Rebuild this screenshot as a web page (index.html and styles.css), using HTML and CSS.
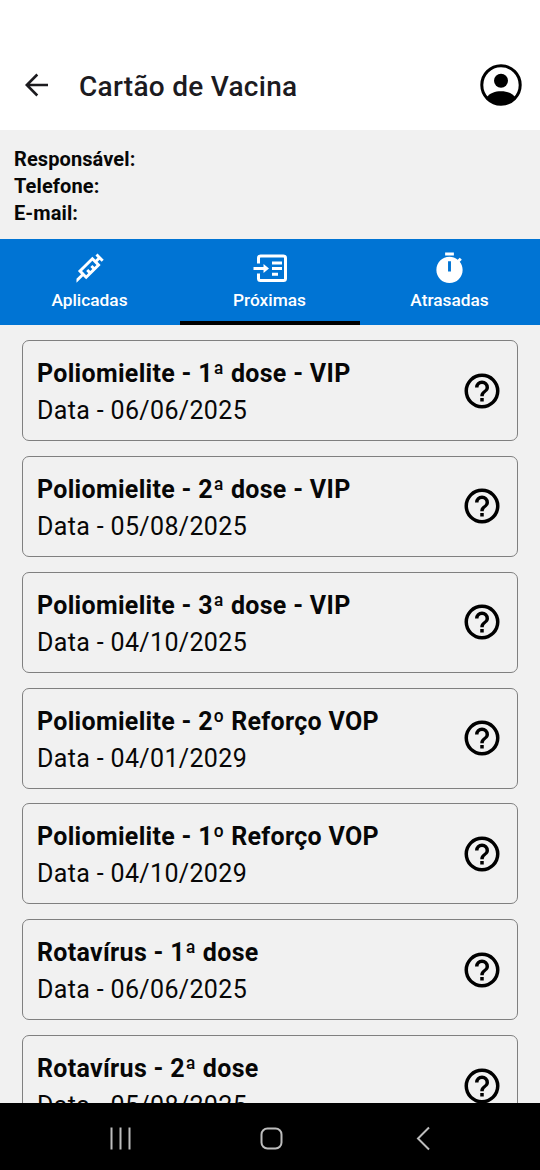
FILE: index.html
```
<!DOCTYPE html>
<html lang="pt-BR">
<head>
<meta charset="utf-8">
<title>Cartão de Vacina</title>
<link rel="stylesheet" href="styles.css">
</head>
<body>
<svg class="defs" width="0" height="0">
<symbol id="help" viewBox="0 0 24 24"><path d="M11 18h2v-2h-2v2m1-16A10 10 0 0 0 2 12a10 10 0 0 0 10 10 10 10 0 0 0 10-10A10 10 0 0 0 12 2m0 18c-4.410 0-8-3.590-8-8s3.590-8 8-8 8 3.590 8 8-3.590 8-8 8m0-14a4 4 0 0 0-4 4h2a2 2 0 0 1 2-2 2 2 0 0 1 2 2c0 2-3 1.750-3 5h2c0-2.250 3-2.500 3-5a4 4 0 0 0-4-4z"/></symbol>
</svg>
<div class="app">
<header class="bar">
<svg class="back" viewBox="0 0 24 24"><path d="M23 12H2M12.300 1.500 1.800 12l10.500 10.500"/></svg>
<h1>Cartão de Vacina</h1>
<svg class="account" viewBox="0 0 42 42"><circle class="ring" cx="21" cy="21" r="19.200"/><circle cx="21" cy="16.700" r="7"/><path d="M6.500 33.500C10 29 15 27.300 21 27.300S32 29 35.500 33.500A19.200 19.200 0 0 1 6.500 33.500z"/></svg>
</header>
<section class="info"><p>Responsável:</p><p>Telefone:</p><p>E-mail:</p></section>
<nav class="tabs">
<div class="tab"><svg viewBox="0 0 24 24"><path d="M11.150 15.180 9.730 13.770 11.150 12.350 12.560 13.770 13.970 12.350 12.560 10.940 13.970 9.530 15.390 10.940 16.800 9.530 13.970 6.700 6.900 13.770 9.730 16.600 11.150 15.180M3.080 19 6.200 15.890 4.080 13.770 13.970 3.870 16.100 6 17.500 4.580 16.100 3.160 17.500 1.750 21.750 6 20.340 7.400 18.920 6 17.500 7.400 19.630 9.530 9.730 19.420 7.610 17.300 3.080 21.840V19z"/></svg><span>Aplicadas</span></div>
<div class="tab active"><svg class="next" viewBox="0 0 36 34"><path class="line" d="M6.500 12V6.500a2 2 0 0 1 2-2h23a2 2 0 0 1 2 2v20.600a2 2 0 0 1-2 2h-23a2 2 0 0 1-2-2V22M1.500 17H12M20 11.500h10M20 17h10M20 22.700h6"/><path d="M11.500 12.500 17 17l-5.500 4.500z"/></svg><span>Próximas</span></div>
<div class="tab"><svg viewBox="0 0 24 24"><path d="M19.030 7.390 20.450 5.970C20 5.460 19.550 5 19.040 4.560L17.620 6C16.070 4.740 14.120 4 12 4 7.030 4 3 8.030 3 13s4.030 9 9 9c5 0 9-4.030 9-9 0-2.120-.74-4.070-1.970-5.610M13 14h-2V7h2v7m2-13H9v2h6V1z"/></svg><span>Atrasadas</span></div>
</nav>
<main class="list">
<article class="card"><div><h2>Poliomielite - 1ª dose - VIP</h2><p>Data - 06/06/2025</p></div><svg><use href="#help"/></svg></article>
<article class="card"><div><h2>Poliomielite - 2ª dose - VIP</h2><p>Data - 05/08/2025</p></div><svg><use href="#help"/></svg></article>
<article class="card"><div><h2>Poliomielite - 3ª dose - VIP</h2><p>Data - 04/10/2025</p></div><svg><use href="#help"/></svg></article>
<article class="card"><div><h2>Poliomielite - 2º Reforço VOP</h2><p>Data - 04/01/2029</p></div><svg><use href="#help"/></svg></article>
<article class="card"><div><h2>Poliomielite - 1º Reforço VOP</h2><p>Data - 04/10/2029</p></div><svg><use href="#help"/></svg></article>
<article class="card"><div><h2>Rotavírus - 1ª dose</h2><p>Data - 06/06/2025</p></div><svg><use href="#help"/></svg></article>
<article class="card"><div><h2>Rotavírus - 2ª dose</h2><p>Data - 05/08/2025</p></div><svg><use href="#help"/></svg></article>
</main>
<footer class="system">
<svg viewBox="0 0 540 67"><path d="M111.500 24.500v22M120.500 24.500v22M129.500 24.500v22M429 24.500 418 35.500l11 11"/><rect x="261.500" y="25.500" width="20" height="20" rx="6"/></svg>
</footer>
</div>
</body>
</html>
```
FILE: styles.css
```
* { box-sizing: border-box; margin: 0; padding: 0; }
body { font-family: Roboto, sans-serif; background: #f1f1f1; color: #070707; }
svg { display: block; flex: none; }
.defs { display: none; }
.app { display: flex; flex-direction: column; height: 1170px; overflow: hidden; }
.bar { flex: none; height: 130px; padding: 40px 18.500px 0 25px; background: #fff; display: flex; align-items: center; }
.back { width: 24px; height: 24px; fill: none; stroke: #1c1b1f; stroke-width: 2.600; }
.bar h1 { flex: 1; margin-left: 30px; font-size: 28px; font-weight: 500; line-height: 36px; letter-spacing: 0.280px; color: #1c1b1f; padding-top: 4px; }
.account { width: 42px; height: 42px; fill: #000; }
.account .ring { fill: none; stroke: #000; stroke-width: 3; }
.info { flex: none; height: 109px; padding: 16px 14px 0; font-size: 20px; font-weight: 700; line-height: 27px; letter-spacing: 0.100px; }
.tabs { flex: none; height: 86px; display: flex; background: #0074d4; color: #fff; }
.tab { flex: 1; display: flex; flex-direction: column; align-items: center; padding: 12px 1px 0 0; border-bottom: 4px solid transparent; font-size: 17.300px; font-weight: 500; line-height: 24px; }
.tab svg { width: 35px; height: 35px; fill: #fff; margin-bottom: 2px; }
.tab .next { width: 36px; }
.tab .line { fill: none; stroke: #fff; stroke-width: 3; }
.tab.active { border-bottom-color: #000; }
.list { flex: 1; min-height: 0; overflow: hidden; display: flex; flex-direction: column; gap: 14.850px; padding: 15px 22px 0 21.500px; }
.card { flex: none; height: 101px; display: flex; align-items: center; justify-content: space-between; border: 1.500px solid #808080; border-radius: 7px; padding: 0 14.500px; }
.card h2 { padding-top: 3px; font-size: 25px; font-weight: 700; line-height: 37px; letter-spacing: 0.310px; white-space: nowrap; }
.card p { font-size: 25px; line-height: 37px; letter-spacing: 0.350px; }
.card svg { width: 42px; height: 42px; fill: #000; }
.system { flex: none; height: 67px; background: #000; }
.system svg { width: 540px; height: 67px; fill: none; stroke: #bdbdbd; stroke-width: 2; }
```
